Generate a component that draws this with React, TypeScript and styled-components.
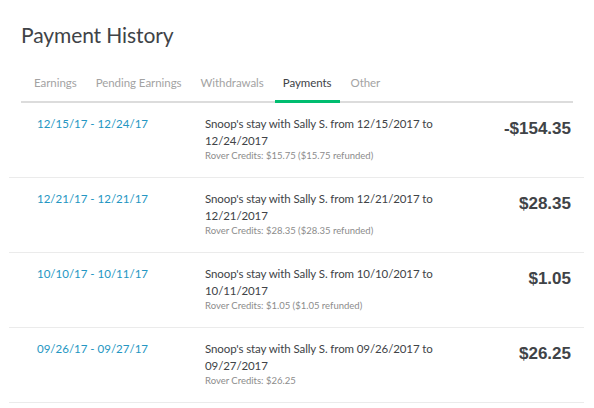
import React from "react";
import styled, { createGlobalStyle } from "styled-components";

const GlobalStyle = createGlobalStyle`
  html, body {
    margin: 0;
    padding: 0;
    background: #ffffff;
  }
  body {
    font-family: Lato, "Open Sans", sans-serif;
    -webkit-font-smoothing: antialiased;
  }
`;

const Page = styled.div`
  width: 594px;
  height: 408px;
  padding: 0 21px;
  box-sizing: border-box;
  overflow: hidden;
`;

const Title = styled.h1`
  margin: 0;
  padding-top: 21px;
  font-size: 21px;
  line-height: 28px;
  font-weight: 400;
  color: #404347;
  letter-spacing: -0.1px;
`;

const TabBar = styled.div`
  display: flex;
  margin-top: 17px;
  border-bottom: 2px solid #dcdcdc;
`;

const Tab = styled.div<{ $active?: boolean }>`
  padding: 8px 8px 11px;
  margin: 0 1.5px -2px;
  font-size: 11.5px;
  line-height: 17px;
  letter-spacing: -0.05px;
  color: ${(p) => (p.$active ? "#404347" : "#a3a3a3")};
  box-shadow: ${(p) => (p.$active ? "inset 0 -3px 0 #00bd70" : "none")};
  padding-bottom: ${(p) => (p.$active ? "12px" : "11px")};
  &:first-child {
    margin-left: 0;
    padding-left: 13px;
  }
`;

const List = styled.div`
  margin: 0 -11px 0 -12px;
`;

const Row = styled.div`
  display: grid;
  grid-template-columns: 168px 240px 1fr;
  padding: 12px 13px 14px 28px;
  border-bottom: 1px solid #ebebeb;
  min-height: 47px;
`;

const DateRange = styled.div`
  font-size: 11.5px;
  line-height: 17px;
  color: #2496c2;
`;

const Details = styled.div`
  display: flex;
  flex-direction: column;
`;

const Description = styled.div`
  font-size: 11.5px;
  line-height: 17px;
  color: #404347;
  letter-spacing: -0.1px;
`;

const Credits = styled.div`
  font-size: 9.5px;
  line-height: 14px;
  color: #8c8c8c;
`;

const Amount = styled.div`
  text-align: right;
  font-family: "Liberation Sans", Arial, sans-serif;
  font-weight: 700;
  font-size: 17px;
  line-height: 20px;
  padding-top: 4px;
  color: #404347;
`;

interface IPayment {
  dates: string;
  from: string;
  to: string;
  credits: string;
  amount: string;
}

const payments: IPayment[] = [
  {
    dates: "12/15/17 - 12/24/17",
    from: "12/15/2017",
    to: "12/24/2017",
    credits: "Rover Credits: $15.75 ($15.75 refunded)",
    amount: "-$154.35",
  },
  {
    dates: "12/21/17 - 12/21/17",
    from: "12/21/2017",
    to: "12/21/2017",
    credits: "Rover Credits: $28.35 ($28.35 refunded)",
    amount: "$28.35",
  },
  {
    dates: "10/10/17 - 10/11/17",
    from: "10/10/2017",
    to: "10/11/2017",
    credits: "Rover Credits: $1.05 ($1.05 refunded)",
    amount: "$1.05",
  },
  {
    dates: "09/26/17 - 09/27/17",
    from: "09/26/2017",
    to: "09/27/2017",
    credits: "Rover Credits: $26.25",
    amount: "$26.25",
  },
];

const tabs = ["Earnings", "Pending Earnings", "Withdrawals", "Payments", "Other"];

export default function App() {
  return (
    <Page>
      <GlobalStyle />
      <Title>Payment History</Title>
      <TabBar>
        {tabs.map((t) => (
          <Tab key={t} $active={t === "Payments"}>
            {t}
          </Tab>
        ))}
      </TabBar>
      <List>
        {payments.map((p) => (
          <Row key={p.dates}>
            <DateRange>{p.dates}</DateRange>
            <Details>
              <Description>
                Snoop's stay with Sally S. from {p.from} to {p.to}
              </Description>
              <Credits>{p.credits}</Credits>
            </Details>
            <Amount>{p.amount}</Amount>
          </Row>
        ))}
      </List>
    </Page>
  );
}
